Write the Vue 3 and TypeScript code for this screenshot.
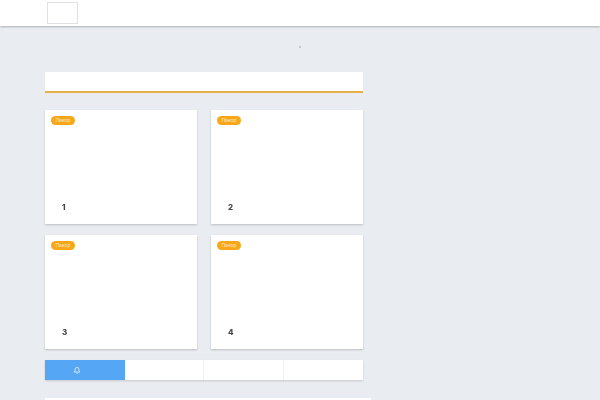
<script setup lang="ts">
const cards = [1, 2, 3, 4]
const tabs = [0, 1, 2, 3]
</script>

<template>
  <div class="page">
    <header class="topbar">
      <div class="logo"></div>
    </header>

    <main class="content">
      <div class="dot-row"><span class="dot"></span></div>
      <div class="title-bar"></div>

      <div class="card-grid">
        <div v-for="card in cards" :key="card" class="card">
          <span class="badge">Пакор</span>
          <span class="card-num">{{ card }}</span>
        </div>
      </div>

      <div class="tabs">
        <div v-for="tab in tabs" :key="tab" class="tab" :class="{ active: tab === 0 }">
          <svg v-if="tab === 0" class="bell" viewBox="0 0 10 10" width="8" height="8">
            <path d="M1.5 7.6h7L7.4 6.2V4.2a2.4 2.4 0 0 0-4.8 0v2z" fill="none" stroke="#dcebfb" stroke-width="1.1" />
            <path d="M4 9h2" stroke="#dcebfb" stroke-width="1" />
          </svg>
        </div>
      </div>

      <div class="bottom-card"></div>
    </main>
  </div>
</template>

<style>
html,
body {
  margin: 0;
  overflow: hidden;
}
</style>

<style scoped>
.page {
  height: 400px;
  overflow: hidden;
  background: #e9ecf0;
  font-family: "Inter", "Liberation Sans", sans-serif;
}

.topbar {
  height: 26px;
  padding: 2px 0 0 47px;
  box-sizing: border-box;
  background: #ffffff;
  box-shadow: 0 1px 2px rgba(0, 0, 0, 0.25);
}

.logo {
  width: 31px;
  height: 22px;
  box-sizing: border-box;
  background: #ffffff;
  border: 1px solid #dfe1e5;
}

.content {
  width: 326px;
  margin-left: 45px;
}

.dot-row {
  height: 46px;
  padding: 20px 0 0 254px;
  box-sizing: border-box;
}

.dot {
  display: block;
  width: 2px;
  height: 2px;
  border-radius: 50%;
  background: #b9bec6;
}

.title-bar {
  width: 318px;
  height: 21px;
  box-sizing: border-box;
  background: #ffffff;
  border-bottom: 2px solid #e8b04a;
}

.card-grid {
  width: 318px;
  margin-top: 17px;
  display: grid;
  grid-template-columns: 152px 152px;
  grid-auto-rows: 114px;
  column-gap: 14px;
  row-gap: 10.5px;
}

.card {
  position: relative;
  background: #ffffff;
  box-shadow: 0 1px 2px rgba(0, 0, 0, 0.2);
}

.badge {
  position: absolute;
  top: 6px;
  left: 6px;
  width: 24px;
  height: 9px;
  border-radius: 5px;
  background: #f9a61a;
  color: #ffe9c4;
  font-size: 5px;
  line-height: 9px;
  text-align: center;
}

.card-num {
  position: absolute;
  left: 17px;
  top: 92px;
  font-size: 8px;
  line-height: 10px;
  font-weight: 800;
  color: #444444;
  opacity: 0.99;
  will-change: opacity;
}

.tabs {
  width: 318px;
  height: 20px;
  margin-top: 11px;
  display: grid;
  grid-template-columns: repeat(4, 1fr);
  background: #ffffff;
  box-shadow: 0 1px 2px rgba(0, 0, 0, 0.15);
}

.tab {
  display: flex;
  align-items: center;
  justify-content: center;
  border-right: 1px solid #f1f2f4;
}

.tab:last-child {
  border-right: none;
}

.tab.active {
  padding-right: 16px;
  background: #55a6f4;
  border-right: none;
}

.bottom-card {
  height: 20px;
  margin-top: 18px;
  background: #ffffff;
}
</style>
